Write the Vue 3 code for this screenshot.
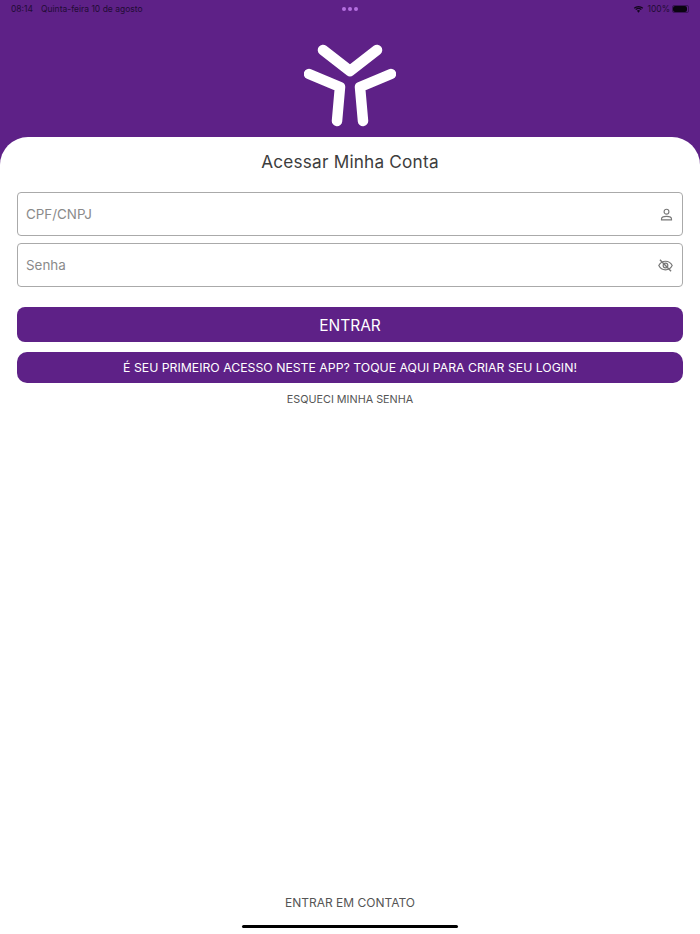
<script setup>
const statusTime = '08:14'
const statusDate = 'Quinta-feira 10 de agosto'
</script>

<template>
  <main class="page">
    <header class="top">
      <div class="status">
        <div class="status-left">
          <span>{{ statusTime }}</span>
          <span>{{ statusDate }}</span>
        </div>
        <div class="dots"><i></i><i></i><i></i></div>
        <div class="status-right">
          <svg class="wifi" width="11" height="8" viewBox="0 0 12 9">
            <path d="M6 8.6 4.2 6.500a2.700 2.700 0 0 1 3.600 0Z" fill="#12061c" />
            <path d="M1.200 3.600a7 7 0 0 1 9.600 0M2.900 5.200a4.600 4.600 0 0 1 6.200 0" fill="none" stroke="#12061c" stroke-width="1.400" />
          </svg>
          <span>100%</span>
          <div class="battery"><div class="battery-fill"></div></div>
        </div>
      </div>
      <svg class="logo" width="92" height="84" viewBox="0 0 92 84">
        <g fill="none" stroke="#fff" stroke-width="10.500" stroke-linecap="round" stroke-linejoin="round">
          <path d="M19 6 46 27 73 6" />
          <path d="M5 30 36 43 33 77" />
          <path d="M87 30 56 43 59 77" />
        </g>
      </svg>
    </header>

    <section class="card">
      <h1 class="title">Acessar Minha Conta</h1>

      <div class="fields">
        <label class="field">
          <span class="placeholder">CPF/CNPJ</span>
          <svg width="13" height="13" viewBox="0 0 14 14" fill="none" stroke="#777" stroke-width="1.200">
            <circle cx="7" cy="4" r="2.600" />
            <path d="M1.600 12.800v-1c0-1.700 2.600-2.800 5.400-2.800s5.400 1.100 5.400 2.800v1Z" />
          </svg>
        </label>
        <label class="field">
          <span class="placeholder">Senha</span>
          <svg width="15" height="13" viewBox="0 0 16 14" fill="none" stroke="#777" stroke-width="1.300">
            <path d="M.8 7C2.300 4 5 2.400 8 2.400S13.700 4 15.200 7C13.700 10 11 11.600 8 11.600S2.300 10 .8 7Z" />
            <circle cx="8" cy="7" r="2.500" />
            <path d="M2 .8 14 13.200" stroke-width="1.500" />
          </svg>
        </label>
      </div>

      <button class="btn btn-main" type="button">ENTRAR</button>
      <button class="btn btn-first" type="button">É SEU PRIMEIRO ACESSO NESTE APP? TOQUE AQUI PARA CRIAR SEU LOGIN!</button>
      <a class="forgot">ESQUECI MINHA SENHA</a>

      <a class="contact">ENTRAR EM CONTATO</a>
      <div class="home-bar"></div>
    </section>
  </main>
</template>

<style>
html,
body {
  margin: 0;
  background: #5e2187;
}
</style>

<style scoped>
.page {
  display: flex;
  flex-direction: column;
  width: 700px;
  height: 934px;
  overflow: hidden;
  background: #5e2187;
  font-family: Inter, "Liberation Sans", sans-serif;
}

.top {
  display: flex;
  flex-direction: column;
  align-items: center;
  height: 137px;
  flex-shrink: 0;
}

.status {
  display: grid;
  grid-template-columns: 1fr auto 1fr;
  align-items: center;
  width: 100%;
  box-sizing: border-box;
  height: 16px;
  padding: 1px 11px 0 11px;
  font-size: 8.500px;
  color: #220c35;
}

.status-left {
  display: flex;
  gap: 8px;
}

.status-right {
  display: flex;
  justify-content: flex-end;
  align-items: center;
  gap: 2px;
}

.wifi {
  margin-right: 1px;
}

.dots {
  display: flex;
  gap: 2px;
}

.dots i {
  width: 4px;
  height: 4px;
  border-radius: 50%;
  background: #b56fe0;
}

.battery {
  width: 17px;
  height: 8px;
  padding: 1px;
  box-sizing: border-box;
  border-radius: 2px;
  border: 1px solid #3a1458;
}

.battery-fill {
  height: 100%;
  margin: -1px 0 -1px -1px;
  padding: 1px;
  background: #0a0410;
  border-radius: 2px;
}

.logo {
  margin-top: 28px;
}

.card {
  position: relative;
  flex: 1;
  display: flex;
  flex-direction: column;
  align-items: stretch;
  padding: 0 17px;
  background: #fff;
  border-radius: 28px 28px 0 0;
}

.title {
  margin: 14px 0 0;
  height: 22px;
  line-height: 22px;
  text-align: center;
  font-size: 17.200px;
  font-weight: 400;
  letter-spacing: 0.2px;
  color: #3d3d3d;
}

.fields {
  display: flex;
  flex-direction: column;
  gap: 7px;
  margin-top: 19px;
}

.field {
  display: flex;
  align-items: center;
  justify-content: space-between;
  height: 44px;
  box-sizing: border-box;
  padding: 0 9px 0 8px;
  border: 1px solid #aaa;
  border-radius: 4px;
}

.placeholder {
  font-size: 13.400px;
  line-height: 18px;
  color: #8a8a8a;
}

.btn {
  display: block;
  width: 100%;
  border: 0;
  padding: 0;
  background: #5e2187;
  color: #fff;
  font-family: inherit;
  text-align: center;
}

.btn-main {
  height: 35px;
  margin-top: 20px;
  padding-top: 1px;
  border-radius: 8px;
  font-size: 15.500px;
}

.btn-first {
  height: 31px;
  margin-top: 10px;
  border-radius: 10px;
  font-size: 12.270px;
}

.forgot {
  margin-top: 10px;
  text-align: center;
  font-size: 10.800px;
  line-height: 14px;
  color: #555;
}

.contact {
  margin-top: auto;
  margin-bottom: 23px;
  text-align: center;
  font-size: 12px;
  line-height: 16px;
  color: #555;
}

.home-bar {
  position: absolute;
  left: 50%;
  bottom: 6px;
  width: 216px;
  height: 3px;
  margin-left: -108px;
  border-radius: 2px;
  background: #000;
}
</style>
